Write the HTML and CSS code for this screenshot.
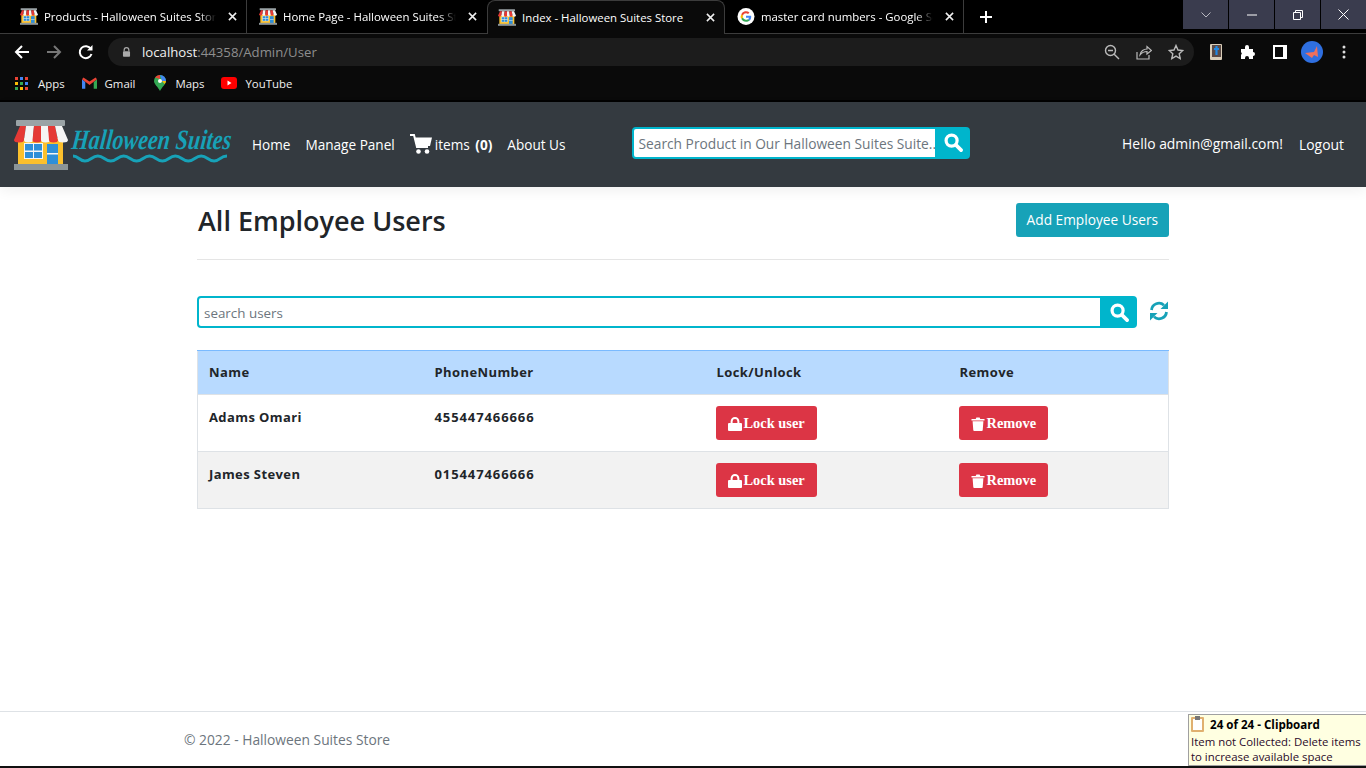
FILE: index.html
```html
<!DOCTYPE html>
<html lang="en">
<head>
  <meta charset="UTF-8">
  <title>Index - Halloween Suites Store</title>
  <link rel="stylesheet" href="styles.css">
</head>
<body>
  <svg class="sprite" width="0" height="0">
    <symbol id="shop" viewBox="0 0 54 50">
      <rect x="2" y="0" width="49" height="6" rx="1" fill="#9aa3a6"/>
      <rect x="4" y="18" width="45" height="27" fill="#fbc02d"/>
      <rect x="10" y="23" width="19" height="16" fill="#f5f5f5"/>
      <rect x="11" y="24" width="8" height="6.500" fill="#2f8fd8"/>
      <rect x="20" y="24" width="8" height="6.500" fill="#2f8fd8"/>
      <rect x="11" y="32" width="8" height="6" fill="#2f8fd8"/>
      <rect x="20" y="32" width="8" height="6" fill="#2f8fd8"/>
      <rect x="33" y="24" width="11" height="21" fill="#2f8fd8"/>
      <rect x="33" y="33" width="11" height="1.500" fill="#f5f5f5"/>
      <rect x="0" y="44" width="54" height="6" fill="#8b9598"/>
      <path d="M6 6h6l-2 14a5 2.500 0 0 1-10 0z" fill="#e53935"/>
      <path d="M12 6h8l-1 14a4.500 2.500 0 0 1-9 0z" fill="#f5f5f5"/>
      <path d="M20 6h7.500l-.5 0 .5 14a4.500 2.500 0 0 1-9 0z" fill="#e53935"/>
      <path d="M27 6h7l2 14a4.500 2.500 0 0 1-9 0z" fill="#f5f5f5"/>
      <path d="M34 6h7l3 14a4.500 2.500 0 0 1-9 0z" fill="#e53935"/>
      <path d="M41 6h7l6 14a5 2.500 0 0 1-10 0z" fill="#f5f5f5"/>
    </symbol>
    <symbol id="search" viewBox="0 0 20 20">
      <circle cx="8" cy="8" r="5.800" fill="none" stroke="currentColor" stroke-width="3.400"/>
      <path d="M12.500 12.500L18 18" stroke="currentColor" stroke-width="3.800" stroke-linecap="round"/>
    </symbol>
    <symbol id="lock" viewBox="0 0 14 14">
      <path d="M3.600 6.500V4.400a3.400 3.400 0 0 1 6.800 0v2.100" fill="none" stroke="currentColor" stroke-width="2"/>
      <rect x="0" y="6" width="14" height="8" rx="1" fill="currentColor"/>
    </symbol>
    <symbol id="trash" viewBox="0 0 14 14">
      <path d="M0.500 2h4.200L5.400 .4h3.200l.7 1.600h4.200v1.400H.5z" fill="currentColor"/>
      <path d="M1.600 4.200h10.800l-.7 9.100a.9.9 0 0 1-.9.7H3.200a.9.9 0 0 1-.9-.7z" fill="currentColor"/>
    </symbol>
    <symbol id="close" viewBox="0 0 10 10">
      <path d="M1 1l8 8M9 1L1 9" stroke="currentColor" stroke-width="1.700"/>
    </symbol>
  </svg>

  <div class="tabstrip">
    <div class="tab">
      <svg class="favicon"><use href="#shop"/></svg>
      <span class="tab-title">Products - Halloween Suites Store</span>
      <svg class="tab-x"><use href="#close"/></svg>
    </div>
    <div class="tab">
      <svg class="favicon"><use href="#shop"/></svg>
      <span class="tab-title">Home Page - Halloween Suites Store</span>
      <svg class="tab-x"><use href="#close"/></svg>
    </div>
    <div class="tab active">
      <svg class="favicon"><use href="#shop"/></svg>
      <span class="tab-title">Index - Halloween Suites Store</span>
      <svg class="tab-x"><use href="#close"/></svg>
    </div>
    <div class="tab">
      <svg class="favicon" viewBox="0 0 16 16">
        <circle cx="8" cy="8" r="8" fill="#fff"/>
        <path d="M12.900 8.200c0-.4 0-.7-.1-1H8v1.900h2.800a2.400 2.400 0 0 1-1 1.600l1.600 1.200c.9-.9 1.500-2.200 1.500-3.700z" fill="#4285f4"/>
        <path d="M8 13c1.300 0 2.500-.4 3.400-1.200l-1.600-1.200c-.5.300-1.100.5-1.800.5-1.300 0-2.400-.9-2.800-2.100L3.500 10.200A5 5 0 0 0 8 13z" fill="#34a853"/>
        <path d="M5.200 9A3 3 0 0 1 5.200 7L3.500 5.800a5 5 0 0 0 0 4.400z" fill="#fbbc05"/>
        <path d="M8 5c.7 0 1.400.3 1.900.7l1.400-1.400A5 5 0 0 0 3.500 5.800L5.200 7C5.600 5.900 6.700 5 8 5z" fill="#ea4335"/>
      </svg>
      <span class="tab-title">master card numbers - Google Search</span>
      <svg class="tab-x"><use href="#close"/></svg>
    </div>
    <svg class="new-tab" viewBox="0 0 12 12"><path d="M6 0v12M0 6h12" stroke="#fff" stroke-width="2"/></svg>
    <div class="win-controls">
      <div class="win-btn"><svg width="10" height="6" viewBox="0 0 10 6"><path d="M.5.500l4.500 4.500 4.500-4.500" fill="none" stroke="#b8b8c0"/></svg></div>
      <div class="win-btn"><svg width="10" height="2" viewBox="0 0 10 2"><path d="M0 1h10" stroke="#fff"/></svg></div>
      <div class="win-btn"><svg width="10" height="10" viewBox="0 0 10 10"><path d="M.5 2.500h7v7h-7zM2.500 2.500v-2h7v7h-2" fill="none" stroke="#fff"/></svg></div>
      <div class="win-btn"><svg width="11" height="11" viewBox="0 0 11 11"><path d="M.5.500l10 10M10.500.500l-10 10" stroke="#fff"/></svg></div>
    </div>
  </div>

  <div class="toolbar">
    <svg class="tool-icon" viewBox="0 0 16 16"><path d="M15 8H2M8 2L2 8l6 6" fill="none" stroke="#fff" stroke-width="2"/></svg>
    <svg class="tool-icon" viewBox="0 0 16 16"><path d="M1 8h13M8 2l6 6-6 6" fill="none" stroke="#777" stroke-width="2"/></svg>
    <svg class="tool-icon" viewBox="0 0 16 16"><path d="M13.500 10a6 6 0 1 1-.6-5" fill="none" stroke="#fff" stroke-width="2"/><path d="M14.500 1v5.500H9z" fill="#fff"/></svg>
    <div class="omnibox">
      <svg class="lock-icon" viewBox="0 0 14 14"><path d="M4 6V4.500a3 3 0 0 1 6 0V6" fill="none" stroke="#aaa" stroke-width="1.500"/><rect x="2.500" y="6" width="9" height="7" rx="1" fill="#aaa"/></svg>
      <span class="url"><span class="url-host">localhost</span>:44358/Admin/User</span>
      <div class="omni-actions">
        <svg class="omni-icon" viewBox="0 0 16 16"><circle cx="6.500" cy="6.500" r="5" fill="none" stroke="#bbb" stroke-width="1.400"/><path d="M4 6.500h5M10.200 10.200L15 15" stroke="#bbb" stroke-width="1.400"/></svg>
        <svg class="omni-icon" viewBox="0 0 16 16"><path d="M1 8v7h12v-4" fill="none" stroke="#bbb" stroke-width="1.200"/><path d="M4 11c.5-4 4-6 7-6V2.500L15.500 6.500 11 10V7.500c-3 0-5 1-7 3.500z" fill="none" stroke="#bbb" stroke-width="1.200"/></svg>
        <svg class="omni-icon" viewBox="0 0 16 16"><path d="M8 1.500l2 4.500 4.800.5-3.600 3.200 1 4.800L8 12.100l-4.200 2.400 1-4.800L1.200 6.500 6 6z" fill="none" stroke="#bbb" stroke-width="1.400"/></svg>
      </div>
    </div>
    <div class="ext-icons">
      <svg class="ext-icon" viewBox="0 0 16 16"><rect x="2" y="0" width="12" height="16" rx="1" fill="#d8cdb8"/><rect x="4" y="1" width="9" height="12" fill="#5a4a45"/><path d="M8.500 2v9M6 5h5" stroke="#1e88e5" stroke-width="2.200"/></svg>
      <svg class="ext-icon" viewBox="0 0 16 16"><path d="M1 5h4V3a2 2 0 0 1 4 0v2h4v3a2 2 0 0 1 0 4v3H9v-1a2 2 0 0 0-4 0v1H1v-4a2 2 0 0 0 0-3z" fill="#fff"/></svg>
      <svg class="ext-icon" viewBox="0 0 16 16"><rect x="1" y="1" width="14" height="14" fill="#fff"/><rect x="3" y="3" width="8" height="10" fill="#0a0a0a"/></svg>
      <svg class="ext-icon avatar" viewBox="0 0 22 22"><circle cx="11" cy="11" r="11" fill="#2f6fe0"/><path d="M4 12l9-1 3-6 1 11-4-2-2 3z" fill="#f0705c"/></svg>
      <svg class="ext-icon" viewBox="0 0 16 16"><circle cx="8" cy="3" r="1.500" fill="#ddd"/><circle cx="8" cy="8" r="1.500" fill="#ddd"/><circle cx="8" cy="13" r="1.500" fill="#ddd"/></svg>
    </div>
  </div>

  <div class="bookmarks">
    <div class="bookmark">
      <svg class="bm-icon" viewBox="0 0 13 13">
        <rect width="3" height="3" fill="#ea4335"/><rect x="5" width="3" height="3" fill="#4285f4"/><rect x="10" width="3" height="3" fill="#ea4335"/>
        <rect y="5" width="3" height="3" fill="#fbbc05"/><rect x="5" y="5" width="3" height="3" fill="#34a853"/><rect x="10" y="5" width="3" height="3" fill="#4285f4"/>
        <rect y="10" width="3" height="3" fill="#34a853"/><rect x="5" y="10" width="3" height="3" fill="#fbbc05"/><rect x="10" y="10" width="3" height="3" fill="#ea4335"/>
      </svg>
      Apps
    </div>
    <div class="bookmark">
      <svg class="bm-icon gmail" viewBox="0 0 16 12">
        <path d="M0 2v10h3.500V5z" fill="#4285f4"/><path d="M16 2v10h-3.500V5z" fill="#34a853"/>
        <path d="M0 2l8 6 8-6-1.500-2L8 4.500 1.500 0z" fill="#ea4335"/>
      </svg>
      Gmail
    </div>
    <div class="bookmark bookmark-maps">
      <svg class="bm-icon maps" viewBox="0 0 12 16">
        <path d="M6 0a6 6 0 0 1 6 6c0 3-4 6-6 10-2-4-6-7-6-10a6 6 0 0 1 6-6z" fill="#34a853"/>
        <path d="M1 2.500A6 6 0 0 1 6 0v4z" fill="#ea4335"/><path d="M6 0a6 6 0 0 1 6 6H8z" fill="#4285f4"/><path d="M12 6c0 1-.5 2-1.500 3L8 6z" fill="#fbbc05"/>
        <circle cx="6" cy="6" r="2" fill="#fff"/>
      </svg>
      Maps
    </div>
    <div class="bookmark">
      <svg class="bm-icon yt" viewBox="0 0 16 12"><rect width="16" height="12" rx="3" fill="#f00"/><path d="M6.500 3.500v5l4-2.500z" fill="#fff"/></svg>
      YouTube
    </div>
  </div>

  <nav class="navbar">
    <div class="brand">
      <svg class="brand-shop"><use href="#shop"/></svg>
      <div class="brand-mark">
        <span class="brand-name">Halloween Suites</span>
        <svg class="brand-wave" viewBox="0 0 160 10" preserveAspectRatio="none"><path d="M1 3c6 0 6 5 12 5s7-5 13-5 7 5 13 5 7-5 13-5 7 5 13 5 7-5 13-5 7 5 13 5 7-5 13-5 7 5 13 5 7-5 13-5 7 5 13 5 6-5 13-5" fill="none" stroke="#17a2b8" stroke-width="3"/></svg>
      </div>
    </div>
    <div class="nav-links">
      <span class="nav-link">Home</span>
      <span class="nav-link">Manage Panel</span>
      <span class="nav-link cart">
        <svg class="cart-icon" viewBox="0 0 22 20"><path d="M0 1h4l3 12h11" fill="none" stroke="#fff" stroke-width="2"/><path d="M5 3.500h17l-2 8.500H7z" fill="#fff"/><circle cx="8.500" cy="17.500" r="2.300" fill="#fff"/><circle cx="17" cy="17.500" r="2.300" fill="#fff"/></svg>
        <span>items <b>(0)</b></span>
      </span>
      <span class="nav-link">About Us</span>
    </div>
    <div class="nav-search">
      <div class="nav-input">Search Product in Our Halloween Suites Suite..</div>
      <div class="nav-search-btn"><svg class="search-icon"><use href="#search"/></svg></div>
    </div>
    <div class="nav-user">
      <span class="nav-hello">Hello admin@gmail.com!</span>
      <span class="nav-logout">Logout</span>
    </div>
  </nav>

  <main class="content">
    <div class="page-head">
      <h1>All Employee Users</h1>
      <span class="btn-add">Add Employee Users</span>
    </div>

    <div class="user-search">
      <div class="user-input">search users</div>
      <div class="user-search-btn"><svg class="search-icon"><use href="#search"/></svg></div>
      <svg class="refresh" viewBox="0 0 20 20">
        <path d="M2.500 9A7.500 7.500 0 0 1 15 4.200" fill="none" stroke="#17a2b8" stroke-width="2.800"/>
        <path d="M19 .500V8h-7.500z" fill="#17a2b8"/>
        <path d="M17.500 11A7.500 7.500 0 0 1 5 15.800" fill="none" stroke="#17a2b8" stroke-width="2.800"/>
        <path d="M1 19.500V12h7.500z" fill="#17a2b8"/>
      </svg>
    </div>

    <table class="users">
      <thead>
        <tr><th class="col-name">Name</th><th class="col-phone">PhoneNumber</th><th class="col-lock">Lock/Unlock</th><th class="col-remove">Remove</th></tr>
      </thead>
      <tbody>
        <tr>
          <td class="col-name">Adams Omari</td>
          <td class="phone">455447466666</td>
          <td class="action"><span class="btn-danger"><svg class="btn-icon"><use href="#lock"/></svg>Lock user</span></td>
          <td class="action"><span class="btn-danger"><svg class="btn-icon"><use href="#trash"/></svg>Remove</span></td>
        </tr>
        <tr class="alt">
          <td class="col-name">James Steven</td>
          <td class="phone">015447466666</td>
          <td class="action"><span class="btn-danger"><svg class="btn-icon"><use href="#lock"/></svg>Lock user</span></td>
          <td class="action"><span class="btn-danger"><svg class="btn-icon"><use href="#trash"/></svg>Remove</span></td>
        </tr>
      </tbody>
    </table>
  </main>

  <footer class="footer">© 2022 - Halloween Suites Store</footer>

  <div class="clip-popup">
    <div class="clip-title">
      <svg class="clip-icon" viewBox="0 0 13 16"><rect y="1" width="13" height="15" rx="1" fill="#e0b070"/><rect x="2" y="3" width="9" height="11" fill="#fff"/><rect x="4" y="0" width="5" height="4" fill="#777"/></svg>
      24 of 24 - Clipboard
    </div>
    <div class="clip-text">Item not Collected: Delete items<br>to increase available space</div>
  </div>
</body>
</html>
```

FILE: styles.css
```css
* {
  box-sizing: border-box;
}

html, body {
  height: 100%;
}

body {
  margin: 0;
  height: 768px;
  overflow: hidden;
  position: relative;
  display: flex;
  flex-direction: column;
  font-family: "Open Sans", "Noto Sans", sans-serif;
  background: #fff;
  color: #212529;
}

.sprite {
  position: absolute;
}

/* browser chrome */
.tabstrip {
  display: flex;
  align-items: flex-start;
  height: 34px;
  padding-left: 8px;
  background: #000;
  border-bottom: 1px solid #3c3c3c;
  flex: none;
}

.tab {
  display: flex;
  align-items: center;
  width: 239px;
  height: 33px;
  padding: 0 9px 0 12px;
  color: #fff;
  font-size: 11.400px;
  border-right: 1px solid #3c3c3c;
}

.tab:nth-child(2) {
  border-right: none;
}

.tab.active {
  height: 34px;
  margin-left: 1px;
  width: 238px;
  padding-left: 10px;
  background: #0a0a0a;
  border: 1px solid #3c3c3c;
  border-bottom: none;
  border-radius: 8px 8px 0 0;
}

.favicon {
  flex: none;
  width: 18px;
  height: 17px;
  margin-right: 6px;
}

.tab-title {
  flex: 1;
  min-width: 0;
  white-space: nowrap;
  overflow: hidden;
  -webkit-mask-image: linear-gradient(to right, #000 90%, transparent);
  mask-image: linear-gradient(to right, #000 90%, transparent);
}

.active .tab-title {
  -webkit-mask-image: none;
  mask-image: none;
}

.tab-x {
  flex: none;
  width: 9px;
  height: 9px;
  margin-left: 12px;
  color: #f0f0f0;
}

.new-tab {
  width: 12px;
  height: 12px;
  margin: 11px 0 0 16px;
}

.win-controls {
  display: flex;
  gap: 1px;
  margin-left: auto;
}

.win-btn {
  display: flex;
  align-items: center;
  justify-content: center;
  width: 45px;
  height: 29px;
  background: #3a3c4e;
}

.toolbar {
  display: flex;
  align-items: center;
  height: 34px;
  padding: 2px 0 0 14px;
  background: #0a0a0a;
  flex: none;
}

.tool-icon {
  width: 16px;
  height: 16px;
  margin-right: 16px;
}

.omnibox {
  display: flex;
  align-items: center;
  width: 1086px;
  height: 28px;
  margin-left: -2px;
  padding-left: 13px;
  border-radius: 14px;
  background: #1c1c1c;
}

.lock-icon {
  width: 11px;
  height: 12px;
  margin-right: 10px;
}

.url {
  color: #8e8e8e;
  font-size: 13.200px;
}

.url-host {
  color: #f0f0f0;
}

.omni-actions {
  display: flex;
  gap: 16px;
  margin-left: auto;
  padding-right: 10px;
}

.omni-icon {
  width: 16px;
  height: 16px;
}

.ext-icons {
  display: flex;
  align-items: center;
  gap: 16px;
  margin-left: 14px;
}

.ext-icon {
  width: 16px;
  height: 16px;
}

.ext-icon.avatar {
  width: 22px;
  height: 22px;
  margin: 0 -3px;
}

.bookmarks {
  display: flex;
  align-items: center;
  gap: 17px;
  height: 34px;
  padding: 0 0 2px 15px;
  background: #0a0a0a;
  color: #f0f0f0;
  font-size: 11.400px;
  flex: none;
  border-bottom: 2px solid #000;
}

.bookmark {
  display: flex;
  align-items: center;
}

.bookmark-maps {
  margin-left: 1px;
}

.bm-icon {
  width: 13px;
  height: 13px;
  margin-right: 10px;
}

.bm-icon.gmail {
  width: 15px;
  height: 12px;
  margin-right: 8px;
}

.bm-icon.maps {
  width: 12px;
  height: 16px;
}

.bm-icon.yt {
  width: 16px;
  height: 12px;
  margin-right: 8px;
}

/* site navbar */
.navbar {
  display: flex;
  align-items: center;
  height: 85px;
  padding-left: 14px;
  background: #343a40;
  color: #fff;
  font-size: 13.600px;
  box-shadow: 0 4px 12px rgba(0, 0, 0, 0.06);
  flex: none;
}

.brand {
  display: flex;
  align-items: center;
  width: 218px;
}

.brand-shop {
  flex: none;
  width: 54px;
  height: 50px;
}

.brand-mark {
  display: flex;
  flex-direction: column;
  margin-left: 4px;
}

.brand-name {
  color: #17a2b8;
  font-family: "Liberation Serif", serif;
  font-style: italic;
  font-weight: bold;
  font-size: 28px;
  line-height: 27px;
  white-space: nowrap;
  letter-spacing: 0.2px;
  transform: scaleX(0.78) skewX(-8deg);
  transform-origin: left center;
}

.brand-wave {
  width: 159px;
  height: 10px;
}

.nav-links {
  display: flex;
  align-items: center;
  margin-left: 20px;
  gap: 15px;
}

.nav-link {
  display: flex;
  align-items: center;
  gap: 3px;
}

.cart b {
  margin-left: 2px;
}

.cart-icon {
  width: 22px;
  height: 20px;
  margin-top: -2px;
}

.nav-search {
  display: flex;
  width: 338px;
  height: 32px;
  margin: 0 0 4px 66px;
}

.nav-input {
  flex: 1;
  padding: 1px 5px 0;
  line-height: 28px;
  background: #fff;
  border: 2px solid #00b5cc;
  border-radius: 4px 0 0 4px;
  color: #6c757d;
  font-size: 13.750px;
  white-space: nowrap;
  overflow: hidden;
}

.nav-search-btn {
  display: flex;
  align-items: center;
  justify-content: center;
  width: 33px;
  background: #00b5cc;
  border-radius: 0 4px 4px 0;
  color: #fff;
}

.search-icon {
  width: 19px;
  height: 19px;
}

.nav-user {
  display: flex;
  align-items: center;
  gap: 16px;
  margin-left: auto;
  padding-right: 22px;
  font-size: 13.900px;
}

.nav-hello {
  margin-bottom: 2px;
}

/* page body */
.content {
  width: 972px;
  margin-left: 197px;
  flex: 1;
}

.page-head {
  display: flex;
  justify-content: space-between;
  align-items: flex-start;
  height: 73px;
  padding: 15px 0 0 1px;
  border-bottom: 1px solid #e5e5e5;
}

h1 {
  margin: 0;
  font-size: 27px;
  font-weight: 600;
  line-height: 38px;
}

.btn-add {
  margin-top: 1px;
  padding: 0 11px;
  line-height: 34px;
  background: #17a2b8;
  border-radius: 3px;
  color: #fff;
  font-size: 13.700px;
}

.user-search {
  display: flex;
  align-items: center;
  margin-top: 36px;
}

.user-input {
  flex: none;
  width: 905px;
  height: 32px;
  padding: 0 5px;
  line-height: 30px;
  border: 2px solid #00b5cc;
  border-radius: 4px 0 0 4px;
  color: #6c757d;
  font-size: 13.400px;
}

.user-search-btn {
  display: flex;
  flex: none;
  align-items: center;
  justify-content: center;
  width: 35px;
  height: 32px;
  background: #00b5cc;
  border-radius: 0 4px 4px 0;
  color: #fff;
}

.refresh {
  flex: none;
  width: 20px;
  height: 20px;
  margin: -2px 0 0 12px;
}

.users {
  width: 100%;
  margin-top: 22px;
  border-collapse: collapse;
  table-layout: fixed;
  font-size: 13px;
  font-weight: bold;
  border: 1px solid #dee2e6;
  letter-spacing: 0.4px;
}

.users thead tr {
  background: #b8daff;
  border-top: 1px solid #7abaff;
}

.users th {
  height: 44px;
  padding: 0 12px 2px;
  text-align: left;
}

.users th.col-name {
  width: 225px;
  padding-left: 11px;
}

.col-phone {
  width: 282px;
}

.col-lock {
  width: 243px;
}

.users th.col-remove {
  padding-left: 12px;
}

.users td {
  height: 57px;
  padding: 13px 12px 0;
  vertical-align: top;
  border-top: 1px solid #dee2e6;
}

.users td.col-name {
  padding-left: 11px;
}

.users td.phone {
  letter-spacing: 0.9px;
}

.users td.action {
  padding: 11px 11px 0;
}

.alt {
  background: #f2f2f2;
}

.btn-danger {
  display: inline-flex;
  align-items: center;
  height: 34px;
  padding: 1px 12px 0;
  background: #dc3545;
  border-radius: 3px;
  color: #fff;
  font-family: "Liberation Serif", serif;
  font-size: 14.400px;
  letter-spacing: 0;
}

.btn-icon {
  width: 14px;
  height: 14px;
  margin-right: 2px;
}

.footer {
  height: 57px;
  padding: 18px 0 0 184px;
  border-top: 1px solid #dee2e6;
  border-bottom: 2px solid #111;
  color: #6c757d;
  font-size: 13.800px;
  flex: none;
}

/* clipboard notice sitting over the footer */
.clip-popup {
  position: absolute;
  right: 0;
  bottom: 2px;
  width: 178px;
  height: 52px;
  padding: 1px 2px;
  background: #ffffe1;
  border: 1px solid #a0a0a0;
  border-right: none;
  color: #2a0a2a;
  font-size: 11.400px;
  line-height: 15px;
  white-space: nowrap;
}

.clip-title {
  display: flex;
  align-items: center;
  font-size: 11.600px;
  font-weight: bold;
  color: #000;
}

.clip-icon {
  width: 13px;
  height: 16px;
  margin-right: 6px;
}

.clip-text {
  margin-top: 2px;
}
```
